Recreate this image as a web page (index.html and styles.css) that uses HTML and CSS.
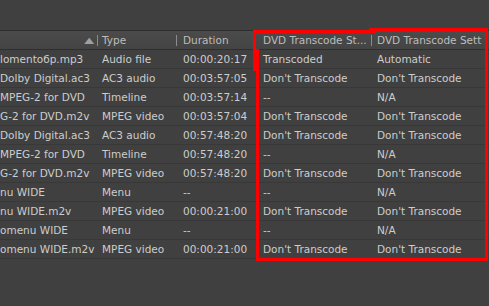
FILE: index.html
```html
<!DOCTYPE html>
<html>
<head>
<meta charset="utf-8">
<link rel="stylesheet" href="styles.css">
</head>
<body>
<div class="panel">
  <div class="table">
    <div class="row head">
      <div class="c name"><span class="sort">&#9650;</span></div>
      <div class="c type">Type</div>
      <div class="c dur">Duration</div>
      <div class="c dvd1">DVD Transcode St...</div>
      <div class="c dvd2">DVD Transcode Sett</div>
    </div>
    <div class="row"><div class="c name">lomentoбр.mp3</div><div class="c type">Audio file</div><div class="c dur">00:00:20:17</div><div class="c dvd1">Transcoded</div><div class="c dvd2">Automatic</div></div>
    <div class="row"><div class="c name">Dolby Digital.ac3</div><div class="c type">AC3 audio</div><div class="c dur">00:03:57:05</div><div class="c dvd1">Don't Transcode</div><div class="c dvd2">Don't Transcode</div></div>
    <div class="row"><div class="c name">MPEG-2 for DVD</div><div class="c type">Timeline</div><div class="c dur">00:03:57:14</div><div class="c dvd1">--</div><div class="c dvd2">N/A</div></div>
    <div class="row"><div class="c name">G-2 for DVD.m2v</div><div class="c type">MPEG video</div><div class="c dur">00:03:57:04</div><div class="c dvd1">Don't Transcode</div><div class="c dvd2">Don't Transcode</div></div>
    <div class="row"><div class="c name">Dolby Digital.ac3</div><div class="c type">AC3 audio</div><div class="c dur">00:57:48:20</div><div class="c dvd1">Don't Transcode</div><div class="c dvd2">Don't Transcode</div></div>
    <div class="row"><div class="c name">MPEG-2 for DVD</div><div class="c type">Timeline</div><div class="c dur">00:57:48:20</div><div class="c dvd1">--</div><div class="c dvd2">N/A</div></div>
    <div class="row"><div class="c name">G-2 for DVD.m2v</div><div class="c type">MPEG video</div><div class="c dur">00:57:48:20</div><div class="c dvd1">Don't Transcode</div><div class="c dvd2">Don't Transcode</div></div>
    <div class="row"><div class="c name">nu WIDE</div><div class="c type">Menu</div><div class="c dur">--</div><div class="c dvd1">--</div><div class="c dvd2">N/A</div></div>
    <div class="row"><div class="c name">nu WIDE.m2v</div><div class="c type">MPEG video</div><div class="c dur">00:00:21:00</div><div class="c dvd1">Don't Transcode</div><div class="c dvd2">Don't Transcode</div></div>
    <div class="row"><div class="c name">omenu WIDE</div><div class="c type">Menu</div><div class="c dur">--</div><div class="c dvd1">--</div><div class="c dvd2">N/A</div></div>
    <div class="row"><div class="c name">omenu WIDE.m2v</div><div class="c type">MPEG video</div><div class="c dur">00:00:21:00</div><div class="c dvd1">Don't Transcode</div><div class="c dvd2">Don't Transcode</div></div>
  </div>
  <div class="mark mark1"></div>
  <div class="mark mark2"></div>
  <div class="mark mark3"></div>
</div>
</body>
</html>
```

FILE: styles.css
```css
html, body {
  margin: 0;
  padding: 0;
  background: #404040;
}
.panel {
  position: relative;
  width: 489px;
  height: 306px;
  overflow: hidden;
  background: #404040;
  padding-top: 30px;
  box-sizing: border-box;
  font-family: "DejaVu Sans", sans-serif;
  font-size: 10.5px;
  color: #cdcdcd;
}
.table {
  display: flex;
  flex-direction: column;
}
.row {
  display: flex;
  height: 19px;
  align-items: center;
  border-bottom: 1px solid #383838;
  box-sizing: border-box;
  white-space: nowrap;
}
.row.head {
  height: 20px;
  border-top: 1px solid #2e2e2e;
  border-bottom: 1px solid #2f2f2f;
  background: linear-gradient(#4b4b4b, #444444);
  color: #bdbdbd;
}
.c {
  overflow: hidden;
  box-sizing: border-box;
  flex: none;
}
.name { width: 97px; padding-left: 0; }
.type { width: 79px; padding-left: 5px; }
.dur { width: 78px; padding-left: 7px; }
.dvd1 { width: 117px; padding-left: 9px; }
.dvd2 { flex: 1; padding-left: 6px; }
.head .c { height: 100%; display: flex; align-items: center; }
.head .c + .c {
  background: linear-gradient(#8c8c8c, #8c8c8c) no-repeat left center / 1px 11px;
}
.head .name { justify-content: flex-end; padding-right: 5px; }
.sort {
  font-size: 8px;
  color: #a0a0a0;
  transform: scaleX(1.6);
  display: inline-block;
}
.mark {
  position: absolute;
  border: 3px solid #ff0000;
  box-sizing: border-box;
}
.mark1 {
  left: 253px;
  top: 30px;
  width: 122px;
  height: 41px;
  border-bottom: none;
  border-right: none;
}
.mark2 {
  left: 369px;
  top: 28px;
  width: 119px;
  height: 233px;
  border-left: none;
}
.mark3 {
  left: 256px;
  top: 49px;
  width: 230px;
  height: 212px;
  border-top: none;
  border-right: none;
}
```
